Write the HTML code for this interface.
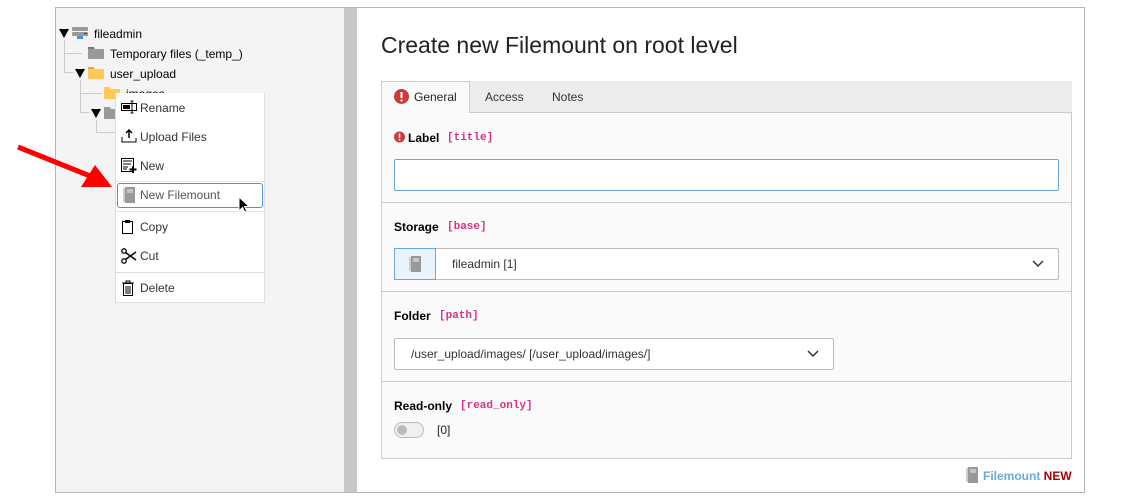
<!DOCTYPE html><html><head><style>
*{box-sizing:border-box;margin:0;padding:0}
body{width:1140px;height:500px;background:#fff;font-family:"Liberation Sans",sans-serif;font-size:12px;color:#000;position:relative;overflow:hidden}
.a{position:absolute}
.mono{font-family:"Liberation Mono",monospace;font-size:11px;color:#d63384;font-weight:bold}
.lbl{font-weight:bold;font-size:12px}
.ln{position:absolute;background:#ccc}
.mi{position:absolute;left:116px;width:148px;height:29px;font-size:12px;color:#333;display:flex;align-items:center;padding-left:24px;background:#fff}
.ic{position:absolute;left:5px;top:7px}
</style></head><body>
<div class="a" style="left:55px;top:7px;width:1030px;height:486px;border:1px solid #b5b5b5"></div>
<div class="a" style="left:56px;top:8px;width:288px;height:484px;background:#f4f4f4"></div>
<div class="a" style="left:344px;top:8px;width:13px;height:484px;background:#c8c8c8"></div>

<div class="ln" style="left:64px;top:40px;width:1px;height:32px"></div>
<div class="ln" style="left:64px;top:53px;width:18px;height:1px"></div>
<div class="ln" style="left:64px;top:72px;width:10px;height:1px"></div>
<div class="ln" style="left:80px;top:80px;width:1px;height:32px"></div>
<div class="ln" style="left:80px;top:93px;width:22px;height:1px"></div>
<div class="ln" style="left:80px;top:112px;width:10px;height:1px"></div>
<div class="ln" style="left:96px;top:120px;width:1px;height:12px"></div>
<div class="ln" style="left:96px;top:132px;width:20px;height:1px"></div>
<div class="a" style="left:59px;top:29px;width:0;height:0;border-left:5px solid transparent;border-right:5px solid transparent;border-top:9px solid #000"></div>
<svg class="a" style="left:72px;top:26px" width="16" height="14"><rect x="0" y="1" width="16" height="4" rx="1" fill="#999"/><rect x="0" y="6" width="16" height="4" rx="1" fill="#999"/><rect x="5" y="10" width="6" height="3" fill="#4a90e2"/><rect x="12" y="7" width="3" height="1" fill="#c00"/></svg>
<div class="a" style="left:94px;top:27px;font-size:12px">fileadmin</div>
<svg class="a" style="left:88px;top:46px" width="16" height="13"><path d="M0 1h6l1 2h9v10H0z" fill="#999"/><rect x="0" y="1" width="6" height="2" fill="#777"/></svg>
<div class="a" style="left:110px;top:47px">Temporary files (_temp_)</div>
<div class="a" style="left:75px;top:69px;width:0;height:0;border-left:5px solid transparent;border-right:5px solid transparent;border-top:9px solid #000"></div>
<svg class="a" style="left:88px;top:66px" width="16" height="13"><path d="M0 1h6l1 2h9v10H0z" fill="#ffc857"/><rect x="0" y="1" width="6" height="2" fill="#e8a93a"/></svg>
<div class="a" style="left:110px;top:67px">user_upload</div>
<svg class="a" style="left:104px;top:86px" width="16" height="13"><path d="M0 1h6l1 2h9v10H0z" fill="#ffc857"/></svg>
<div class="a" style="left:126px;top:87px">images</div>
<div class="a" style="left:91px;top:109px;width:0;height:0;border-left:5px solid transparent;border-right:5px solid transparent;border-top:9px solid #000"></div>
<svg class="a" style="left:104px;top:106px" width="16" height="13"><path d="M0 1h6l1 2h9v10H0z" fill="#999"/></svg>

<div class="a" style="left:115px;top:93px;width:150px;height:210px;border:1px solid #ddd;background:#fff"></div>
<div class="mi" style="top:93px"><svg class="ic" width="16" height="14" style="top:7px"><rect x="0.5" y="3.5" width="15" height="7" fill="none" stroke="#000"/><rect x="2" y="5" width="7" height="4" fill="#000"/><path d="M11 1v12M9.5 1h3M9.5 13h3" stroke="#000"/></svg>Rename</div>
<div class="mi" style="top:122px"><svg class="ic" width="16" height="14"><path d="M8 1v8M5 4l3-3 3 3" stroke="#000" fill="none" stroke-width="1.5"/><path d="M1 8v5h14V9" fill="none" stroke="#000"/></svg>Upload Files</div>
<div class="mi" style="top:151px"><svg class="ic" width="16" height="15"><rect x="0.5" y="0.5" width="12" height="13" fill="none" stroke="#000"/><path d="M2 3h9M2 6h8M2 9h5M2 11h4" stroke="#000"/><path d="M12 8v7M8.5 11.5h7" stroke="#000" stroke-width="2"/></svg>New</div>
<div class="ln" style="left:116px;top:181px;width:148px;height:1px;background:#e6e6e6"></div>
<div class="a" style="left:117px;top:183px;width:146px;height:25px;border:1px solid #4a90e2;border-radius:3px;background:#fff"></div>
<svg class="a" style="left:123px;top:187px" width="12" height="16"><rect x="0" y="1" width="3" height="14" rx="1" fill="#ccc"/><rect x="2" y="0" width="10" height="16" fill="#999"/><path d="M4 3h6M4 5h6" stroke="#eee"/></svg>
<div class="a" style="left:140px;top:188px;color:#555">New Filemount</div>
<svg class="a" style="left:238px;top:196px" width="12" height="18"><path d="M1 1v14l3.5-3.5 2.5 5 2-1-2.5-5H11z" fill="#000" stroke="#fff" stroke-width="1"/></svg>
<div class="ln" style="left:116px;top:211px;width:148px;height:1px;background:#e6e6e6"></div>
<div class="mi" style="top:212px"><svg class="ic" width="14" height="16" style="top:7px"><rect x="1.5" y="2.5" width="10" height="12" fill="none" stroke="#000"/><rect x="4" y="1" width="5" height="3" fill="#000"/></svg>Copy</div>
<div class="mi" style="top:241px"><svg class="ic" width="16" height="16"><circle cx="3" cy="3" r="2.2" fill="none" stroke="#000" stroke-width="1.3"/><circle cx="3" cy="13" r="2.2" fill="none" stroke="#000" stroke-width="1.3"/><path d="M4.5 4.5L15 12M4.5 11.5L15 4" stroke="#000" stroke-width="1.5"/></svg>Cut</div>
<div class="ln" style="left:116px;top:272px;width:148px;height:1px;background:#ddd"></div>
<div class="mi" style="top:273px"><svg class="ic" width="14" height="16" style="top:7px"><path d="M1 3h12M5 3V1h4v2" stroke="#000" fill="none"/><rect x="2.5" y="3.5" width="9" height="12" fill="none" stroke="#000"/><path d="M5 6v8M7 6v8M9 6v8" stroke="#000"/></svg>Delete</div>

<svg class="a" style="left:15px;top:140px" width="100" height="50"><path d="M3 7L80 38" stroke="#f00" stroke-width="5"/><path d="M97 47L66 47L80 25z" fill="#f00"/></svg>

<div class="a" style="left:381px;top:32px;font-size:23px;color:#222">Create new Filemount on root level</div>
<div class="a" style="left:381px;top:81px;width:691px;height:32px;background:#ececec;border-bottom:1px solid #ccc"></div>
<div class="a" style="left:381px;top:81px;width:89px;height:33px;background:#fafafa;border:1px solid #ccc;border-bottom:none"></div>
<svg class="a" style="left:394px;top:89px" width="15" height="15"><circle cx="7.5" cy="7.5" r="7.5" fill="#c83c3c"/><rect x="6.5" y="3" width="2" height="6" fill="#fff"/><rect x="6.5" y="10.5" width="2" height="2" fill="#fff"/></svg>
<div class="a" style="left:414px;top:90px;color:#222">General</div>
<div class="a" style="left:485px;top:90px;color:#333">Access</div>
<div class="a" style="left:552px;top:90px;color:#333">Notes</div>
<div class="a" style="left:381px;top:113px;width:691px;height:346px;background:#fafafa;border:1px solid #ccc;border-top:none"></div>
<svg class="a" style="left:394px;top:131px" width="11" height="12"><circle cx="5.5" cy="6" r="5.5" fill="#c83c3c"/><rect x="4.7" y="2.5" width="1.6" height="4.5" fill="#fff"/><rect x="4.7" y="8" width="1.6" height="1.5" fill="#fff"/></svg>
<div class="a lbl" style="left:408px;top:131px">Label</div>
<div class="a mono" style="left:447px;top:132px">[title]</div>
<div class="a" style="left:394px;top:159px;width:665px;height:32px;border:1px solid #6aa8e0;background:#fff;border-radius:2px"></div>
<div class="ln" style="left:382px;top:202px;width:689px;height:1px"></div>
<div class="a lbl" style="left:394px;top:220px">Storage</div>
<div class="a mono" style="left:447px;top:221px">[base]</div>
<div class="a" style="left:394px;top:248px;width:665px;height:32px;border:1px solid #bbb;background:#fff;border-radius:2px"></div>
<div class="a" style="left:394px;top:248px;width:42px;height:32px;border:1px solid #6aa8e0;background:#eaf3fc"></div>
<svg class="a" style="left:409px;top:256px" width="12" height="16"><rect x="0" y="1" width="3" height="14" rx="1" fill="#ccc"/><rect x="2" y="0" width="10" height="16" fill="#999"/><path d="M4 3h6M4 5h6" stroke="#eee"/></svg>
<div class="a" style="left:452px;top:257px;color:#333">fileadmin [1]</div>
<svg class="a" style="left:1032px;top:260px" width="12" height="8"><path d="M1 1l5 5 5-5" stroke="#333" stroke-width="1.5" fill="none"/></svg>
<div class="ln" style="left:382px;top:291px;width:689px;height:1px"></div>
<div class="a lbl" style="left:394px;top:309px">Folder</div>
<div class="a mono" style="left:439px;top:310px">[path]</div>
<div class="a" style="left:394px;top:338px;width:440px;height:32px;border:1px solid #bbb;background:#fff;border-radius:2px"></div>
<div class="a" style="left:411px;top:347px;color:#333">/user_upload/images/ [/user_upload/images/]</div>
<svg class="a" style="left:807px;top:350px" width="12" height="8"><path d="M1 1l5 5 5-5" stroke="#333" stroke-width="1.5" fill="none"/></svg>
<div class="ln" style="left:382px;top:381px;width:689px;height:1px"></div>
<div class="a lbl" style="left:394px;top:399px">Read-only</div>
<div class="a mono" style="left:460px;top:400px">[read_only]</div>
<div class="a" style="left:394px;top:422px;width:30px;height:16px;border:1px solid #bbb;border-radius:8px;background:#f0f0f0"></div>
<div class="a" style="left:397px;top:425px;width:10px;height:10px;border-radius:5px;background:#bbb"></div>
<div class="a" style="left:437px;top:423px;color:#222">[0]</div>
<svg class="a" style="left:966px;top:467px" width="12" height="16"><rect x="0" y="1" width="3" height="14" rx="1" fill="#ccc"/><rect x="2" y="0" width="10" height="16" fill="#999"/><path d="M4 3h6M4 5h6" stroke="#eee"/></svg>
<div class="a" style="left:983px;top:469px;font-weight:bold;color:#6aa8e0">Filemount <span style="color:#a00">NEW</span></div>
</body></html>
